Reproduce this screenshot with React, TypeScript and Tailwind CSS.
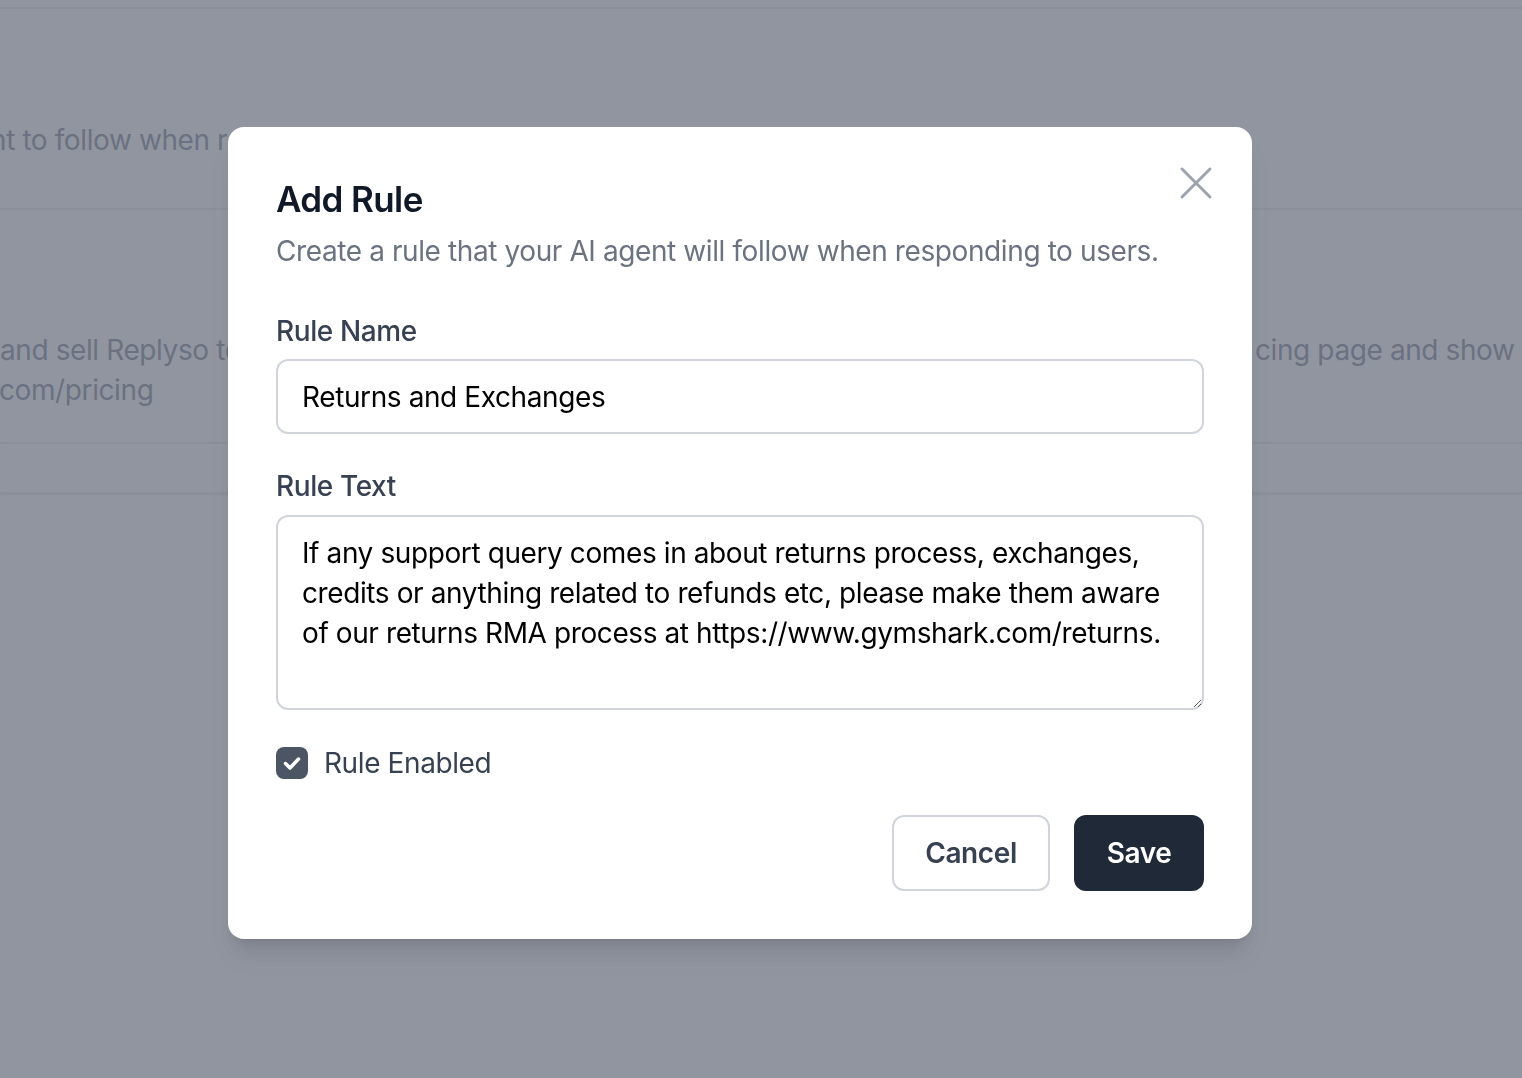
import { useState } from "react";

const ruleText =
	"If any support query comes in about returns process, exchanges, credits or anything related to refunds etc, please make them aware of our returns RMA process at https://www.gymshark.com/returns.";

const CloseIcon = () => (
	<svg viewBox="0 0 24 24" fill="none" stroke="currentColor" strokeWidth={1.25} className="w-[56px] h-[56px]">
		<path d="M6 6l12 12M18 6L6 18" strokeLinecap="round" />
	</svg>
);

const Background = () => (
	<div className="w-full h-[1078px] bg-white overflow-hidden text-[28px] leading-[40px] text-[#6b7280]">
		<div className="h-[7px]" />
		<div className="border-t-2 border-[#e5e7eb] h-[201px] pt-[111px] whitespace-nowrap">
			<span className="block -ml-[10px]">nt to follow when responding to customers about shipping.</span>
		</div>
		<div className="border-t-2 border-[#e5e7eb] h-[234px] pt-[120px] whitespace-nowrap">
			<div className="flex">
				<div className="w-[1252px] shrink-0 overflow-hidden">and sell Replyso to any customer who asks about plans, link them to the pri</div>
				<div className="pl-[3px]">cing page and show from there</div>
			</div>
			<div className="-ml-[1px]">com/pricing</div>
		</div>
		<div className="border-t-2 border-b-2 border-[#e5e7eb] h-[52px] shadow-sm" />
	</div>
);

export default function App() {
	const [name, setName] = useState("Returns and Exchanges");
	const [text, setText] = useState(ruleText);
	const [enabled, setEnabled] = useState(true);

	return (
		<div className="relative w-full h-[1078px] overflow-hidden tracking-[-0.4px] [font-family:Inter,'Noto_Sans',sans-serif]">
			<Background />

			<div className="fixed inset-0 bg-[#6b7280]/75 flex items-start pt-[127px] pl-[228px]">
				<div className="relative w-[1024px] bg-white rounded-2xl shadow-xl p-12">
					<button className="absolute top-[28px] right-[28px] text-[#9ca3af]">
						<CloseIcon />
					</button>

					<h2 className="text-[35px] leading-[48px] font-semibold tracking-[-0.6px] text-[#111827]">Add Rule</h2>
					<p className="mt-2 text-[28px] leading-[40px] text-[#6b7280]">
						Create a rule that your AI agent will follow when responding to users.
					</p>

					<label className="block mt-10 mb-2 text-[28px] leading-[40px] font-medium text-[#374151]">Rule Name</label>
					<input
						value={name}
						onChange={e => setName(e.target.value)}
						className="block w-full h-[75px] px-6 border-2 border-[#d1d5db] rounded-xl text-[28px] text-black outline-none"
					/>

					<label className="block mt-8 mb-[9px] text-[28px] leading-[40px] font-medium text-[#374151]">Rule Text</label>
					<textarea
						value={text}
						onChange={e => setText(e.target.value)}
						className="block w-full h-[195px] px-6 py-4 border-2 border-[#d1d5db] rounded-xl text-[28px] leading-[40px] text-black outline-none"
					/>

					<label className="mt-[33px] flex items-center gap-4 h-[40px] cursor-pointer" onClick={() => setEnabled(!enabled)}>
						<span className={`w-[32px] h-[32px] rounded-lg flex items-center justify-center ${enabled ? "bg-[#4b5563]" : "border-2 border-[#d1d5db]"}`}>
							{enabled && (
								<svg viewBox="0 0 32 32" className="w-[32px] h-[32px]" fill="none" stroke="white" strokeWidth={3.5} strokeLinecap="round" strokeLinejoin="round">
									<path d="M9.5 16.5l4.5 4.5 8.5-9" />
								</svg>
							)}
						</span>
						<span className="text-[28px] leading-[40px] text-[#374151]">Rule Enabled</span>
					</label>

					<div className="mt-8 flex justify-end gap-6">
						<button className="w-[158px] h-[76px] rounded-xl border-2 border-[#d1d5db] bg-white text-[28px] font-semibold text-[#374151]">
							Cancel
						</button>
						<button className="w-[130px] h-[76px] rounded-xl bg-[#1f2937] text-[28px] font-semibold text-white">
							Save
						</button>
					</div>
				</div>
			</div>
		</div>
	);
}
